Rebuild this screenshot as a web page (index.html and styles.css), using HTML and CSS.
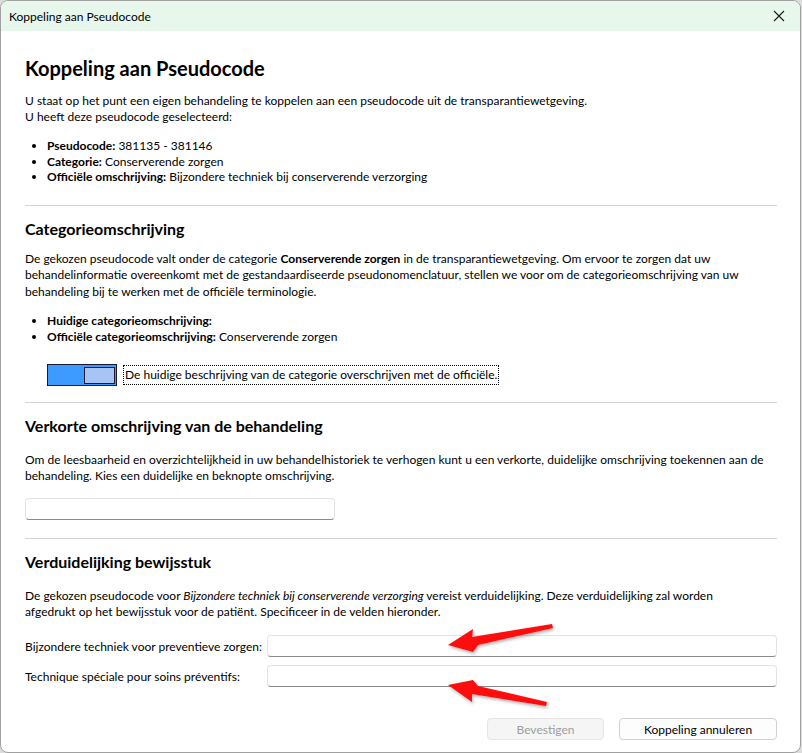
FILE: index.html
```html
<!DOCTYPE html>
<html lang="nl">
<head>
    <meta charset="UTF-8">
    <meta name="viewport" content="width=device-width, initial-scale=1.0">
    <title>Koppeling aan Pseudocode</title>
    <link rel="stylesheet" href="styles.css">
</head>
<body>
    <div class="window">
        <div class="titlebar">
            <span class="title">Koppeling aan Pseudocode</span>
            <svg class="close" width="12" height="12" viewBox="0 0 12 12">
                <path d="M1 1 L11 11 M11 1 L1 11" stroke="#1a1a1a" stroke-width="1.1" fill="none"/>
            </svg>
        </div>

        <div class="content">
            <h1>Koppeling aan Pseudocode</h1>
            <p>U staat op het punt een eigen behandeling te koppelen aan een pseudocode uit de transparantiewetgeving.<br>
               U heeft deze pseudocode geselecteerd:</p>
            <ul>
                <li><b>Pseudocode:</b> 381135 - 381146</li>
                <li><b>Categorie:</b> Conserverende zorgen</li>
                <li><b>Officiële omschrijving:</b> Bijzondere techniek bij conserverende verzorging</li>
            </ul>

            <hr>

            <!-- categorie -->
            <h2>Categorieomschrijving</h2>
            <p class="tall">De gekozen pseudocode valt onder de categorie <b>Conserverende zorgen</b> in de transparantiewetgeving. Om ervoor te zorgen dat uw behandelinformatie overeenkomt met de gestandaardiseerde pseudonomenclatuur, stellen we voor om de categorieomschrijving van uw behandeling bij te werken met de officiële terminologie.</p>
            <ul>
                <li><b>Huidige categorieomschrijving:</b></li>
                <li><b>Officiële categorieomschrijving:</b> Conserverende zorgen</li>
            </ul>
            <div class="toggle-row">
                <span class="toggle"><span class="thumb"></span></span>
                <span class="focus-label">De huidige beschrijving van de categorie overschrijven met de officiële.</span>
            </div>

            <hr class="after-toggle">

            <!-- verkorte omschrijving -->
            <h2 class="spaced">Verkorte omschrijving van de behandeling</h2>
            <p>Om de leesbaarheid en overzichtelijkheid in uw behandelhistoriek te verhogen kunt u een verkorte, duidelijke omschrijving toekennen aan de behandeling. Kies een duidelijke en beknopte omschrijving.</p>
            <input type="text" class="field short">

            <hr class="after-input">

            <!-- bewijsstuk -->
            <h2 class="spaced">Verduidelijking bewijsstuk</h2>
            <p class="narrow">De gekozen pseudocode voor <i>Bijzondere techniek bij conserverende verzorging</i> vereist verduidelijking. Deze verduidelijking zal worden afgedrukt op het bewijsstuk voor de patiënt. Specificeer in de velden hieronder.</p>
            <div class="form">
                <label>Bijzondere techniek voor preventieve zorgen:</label>
                <input type="text" class="field">
                <label>Technique spéciale pour soins préventifs:</label>
                <input type="text" class="field">
            </div>

            <div class="buttons">
                <button class="btn" disabled>Bevestigen</button>
                <button class="btn">Koppeling annuleren</button>
            </div>
        </div>

        <svg class="arrows" width="801" height="753" viewBox="0 0 801 753">
            <defs>
                <filter id="shadow" x="-20%" y="-50%" width="140%" height="200%">
                    <feDropShadow dx="1" dy="2" stdDeviation="1.5" flood-color="#000" flood-opacity="0.3"/>
                </filter>
            </defs>
            <polygon filter="url(#shadow)" fill="#ff1010"
                points="448,645 473,629 472,637 552,624 553,628 478,645 473,652"/>
            <polygon filter="url(#shadow)" fill="#ff1010"
                points="448,685 473,680 478,686 547,702 546,706 472,694 472,702"/>
        </svg>
    </div>
</body>
</html>
```

FILE: styles.css
```css
body {
    margin: 0;
    background-color: #dcdcdc;
    font-family: "Lato", "Noto Sans", sans-serif;
    font-size: 12px;
    color: #000;
}
.window {
    position: relative;
    width: 799px;
    height: 751px;
    background-color: white;
    border: 1px solid #a0a0a0;
    border-radius: 8px;
    overflow: hidden;
}
.titlebar {
    height: 30px;
    background-color: #e8f7ec;
    display: flex;
    align-items: center;
    justify-content: space-between;
    padding: 0 15px 0 8px;
}
.title {
    font-size: 12px;
}
.content {
    padding: 25px 23px 0 24px;
}
h1 {
    font-size: 20px;
    line-height: 24px;
    margin: 0 0 13px 0;
    font-weight: bold;
}
h2 {
    font-size: 16px;
    line-height: 20px;
    margin: 13px 0 12px 0;
    font-weight: bold;
}
h2.spaced {
    margin-bottom: 16px;
}
p {
    margin: 0;
    line-height: 16px;
}
p.tall {
    line-height: 16.5px;
}
p.narrow {
    line-height: 16px;
    max-width: 738px;
}
ul {
    margin: 13px 0 0 0;
    padding-left: 22px;
    line-height: 15.5px;
}
hr {
    border: none;
    border-top: 1px solid #d4d4d4;
    margin: 20px 0 0 0;
}
hr.after-toggle {
    margin-top: 16px;
}
hr.after-input {
    margin-top: 18px;
}
.toggle-row {
    display: flex;
    align-items: center;
    margin: 20px 0 0 22px;
    gap: 6px;
}
.toggle {
    display: flex;
    justify-content: flex-end;
    align-items: center;
    width: 66px;
    height: 18px;
    padding: 1px;
    background-color: #3d9bff;
    border: 1px solid #1a1a2e;
}
.thumb {
    width: 29px;
    height: 15px;
    background-color: #a7c4f5;
    border: 1px solid #1a1a2e;
}
.focus-label {
    border: 1px dotted #000;
    padding: 1px 1px;
    line-height: 16px;
}
.field {
    box-sizing: border-box;
    height: 22px;
    background: white;
    border: 1px solid #e3e3e3;
    border-bottom: 1px solid #8a8a8a;
    border-radius: 4px;
    outline: none;
}
.field.short {
    display: block;
    width: 310px;
    margin-top: 14px;
}
.form {
    display: grid;
    grid-template-columns: 242px 1fr;
    row-gap: 8px;
    align-items: center;
    margin-top: 15px;
}
.buttons {
    display: flex;
    justify-content: flex-end;
    gap: 15px;
    margin-top: 31px;
}
.btn {
    box-sizing: border-box;
    height: 22px;
    font-family: "Lato", "Noto Sans", sans-serif;
    font-size: 12px;
    background-color: #fdfdfd;
    border: 1px solid #d0d0d0;
    border-radius: 4px;
    color: #000;
}
.btn:first-child {
    width: 117px;
}
.btn:last-child {
    width: 158px;
}
.btn:disabled {
    background-color: #f5f5f5;
    border-color: #e5e5e5;
    color: #9d9d9d;
}
.arrows {
    position: absolute;
    left: -1px;
    top: -1px;
    pointer-events: none;
}
```
